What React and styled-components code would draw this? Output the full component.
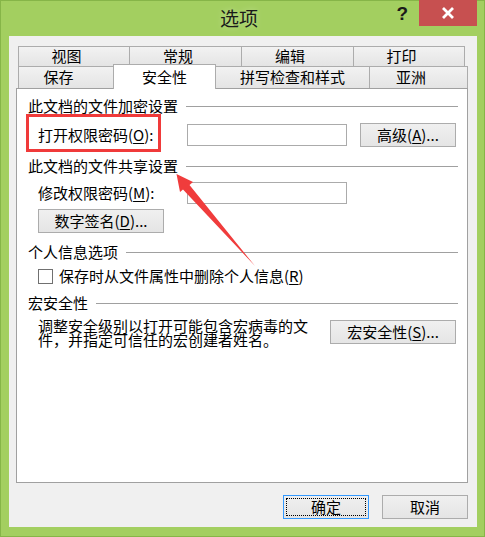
import styled, { createGlobalStyle } from "styled-components";

const GlobalStyle = createGlobalStyle`
  html, body {
    margin: 0;
    padding: 0;
    overflow: hidden;
    background: #a3cf60;
  }
  * { box-sizing: border-box; }
`;

const fonte = `"Noto Sans CJK SC", "Noto Sans", sans-serif`;

const Janela = styled.div`
  position: relative;
  width: 485px;
  height: 537px;
  background: #a3cf60;
  border: 1px solid #86b548;
  display: flex;
  flex-direction: column;
  font-family: ${fonte};
  font-size: 15px;
  color: #000;
`;

const BarraTitulo = styled.div`
  height: 35px;
  display: grid;
  grid-template-columns: 1fr auto 1fr;
  align-items: start;
  padding-right: 7px;
`;

const Titulo = styled.div`
  grid-column: 2;
  font-size: 19px;
  line-height: 33px;
  color: #1a1a1a;
  text-shadow: 0 0 6px rgba(255, 255, 255, 0.35);
`;

const Controles = styled.div`
  grid-column: 3;
  justify-self: end;
  display: flex;
  align-items: flex-start;
`;

const Ajuda = styled.div`
  font-family: "Liberation Sans", sans-serif;
  font-weight: bold;
  font-size: 19px;
  line-height: 26px;
  color: #1a1a1a;
  margin-right: 11px;
`;

const Fechar = styled.div`
  width: 58px;
  height: 26px;
  margin-top: -1px;
  background: #c75050;
  color: #fff;
  display: flex;
  align-items: center;
  justify-content: center;
`;

const Cliente = styled.div`
  flex: 1;
  margin: 0 7px 9px 8px;
  background: #f0f0f0;
  padding: 10px 9px 8px 7px;
  display: flex;
  flex-direction: column;
`;

const Abas = styled.div`
  margin: 0 1px 0 2px;
  display: flex;
  flex-direction: column;
  position: relative;
  z-index: 1;
`;

const LinhaAbas = styled.div`
  display: grid;
  grid-template-columns: ${(p) => p.$colunas};
  height: ${(p) => p.$altura}px;
`;

const Aba = styled.div`
  border: 1px solid #acacac;
  border-bottom: none;
  margin-left: -1px;
  &:first-child { margin-left: 0; }
  background: linear-gradient(#f2f2f2, #e4e4e4);
  display: flex;
  align-items: center;
  justify-content: center;
  padding-right: ${(p) => (p.$recuo ? 15 : 0)}px;
  padding-bottom: 1px;
  line-height: 18px;
  white-space: nowrap;
  ${(p) =>
    p.$ativa &&
    `
    background: #fff;
    margin-top: -2px;
    margin-bottom: -1px;
  `}
`;

const Painel = styled.div`
  flex: 1;
  background: #fff;
  border: 1px solid #a0a0a0;
  padding: 8px 9px 0 11px;
  display: flex;
  flex-direction: column;
`;

const Cabecalho = styled.div`
  height: 18px;
  margin-top: ${(p) => p.$topo || 0}px;
  display: flex;
  align-items: center;
  gap: 8px;
  line-height: 18px;
  white-space: nowrap;

  &::after {
    content: "";
    flex: 1;
    height: 1px;
    background: #a0a0a0;
  }
`;

const Linha = styled.div`
  display: flex;
  align-items: center;
  margin-top: ${(p) => p.$topo || 0}px;
  padding-left: 10px;
  height: ${(p) => p.$altura}px;
  line-height: 18px;
`;

const Rotulo = styled.label`
  position: relative;
  width: 149px;
  line-height: 18px;
  white-space: nowrap;
`;

const Destaque = styled.span`
  position: absolute;
  left: -12px;
  top: -12px;
  width: 135px;
  height: 38px;
  border: 3px solid #f03a3a;
  pointer-events: none;
`;

const Campo = styled.div`
  width: 160px;
  height: ${(p) => p.$altura || 22}px;
  border: 1px solid #ababab;
  background: #fff;
`;

const Botao = styled.button`
  font-family: ${fonte};
  font-size: 15px;
  color: #000;
  width: ${(p) => p.$largura}px;
  height: 24px;
  margin-left: ${(p) => p.$esquerda || 0}px;
  margin-top: ${(p) => p.$topo || 0}px;
  padding: 0;
  border: 1px solid #acacac;
  background: linear-gradient(#f0f0f0, #e5e5e5);
  line-height: 18px;
  display: flex;
  align-items: center;
  justify-content: center;
  white-space: nowrap;
  position: relative;

  ${(p) =>
    p.$foco &&
    `
    border-color: #3399ff;
    &::after {
      content: "";
      position: absolute;
      inset: 2px;
      border: 1px dotted #000;
    }
  `}
`;

const Caixa = styled.span`
  width: 15px;
  height: 15px;
  border: 1px solid #707070;
  background: #fff;
  margin-right: 6px;
`;

const Descricao = styled.div`
  width: 272px;
  line-height: 14px;
`;

const LinhaMacro = styled.div`
  display: flex;
  align-items: flex-start;
  margin-top: 7px;
  padding-left: 10px;
`;

const Rodape = styled.div`
  display: flex;
  justify-content: flex-end;
  gap: 13px;
  margin-top: 12px;
`;

const Seta = styled.svg`
  position: absolute;
  left: 0;
  top: 0;
  pointer-events: none;
`;

const Sub = styled.u`
  text-underline-offset: 2px;
`;

export default function App() {
  return (
    <>
      <GlobalStyle />
      <Janela>
        <BarraTitulo>
          <Titulo>选项</Titulo>
          <Controles>
            <Ajuda>?</Ajuda>
            <Fechar>
              <svg width="14" height="12" viewBox="0 0 14 12">
                <path d="M2 1 L12 11 M12 1 L2 11" stroke="#fff" strokeWidth="2.8" />
              </svg>
            </Fechar>
          </Controles>
        </BarraTitulo>

        <Cliente>
          <Abas>
            <LinhaAbas $colunas="112px 112px 112px 111px" $altura={20}>
              <Aba $recuo>视图</Aba>
              <Aba $recuo>常规</Aba>
              <Aba $recuo>编辑</Aba>
              <Aba $recuo>打印</Aba>
            </LinhaAbas>
            <LinhaAbas $colunas="96px 102px 154px 98px" $altura={22}>
              <Aba $recuo>保存</Aba>
              <Aba $ativa>安全性</Aba>
              <Aba>拼写检查和样式</Aba>
              <Aba $recuo>亚洲</Aba>
            </LinhaAbas>
          </Abas>

          <Painel>
            <Cabecalho>此文档的文件加密设置</Cabecalho>
            <Linha $topo={8} $altura={24}>
              <Rotulo>
                打开权限密码(<Sub>O</Sub>):
                <Destaque />
              </Rotulo>
              <Campo />
              <Botao $largura={96} $esquerda={13}>
                高级(<Sub>A</Sub>)...
              </Botao>
            </Linha>

            <Cabecalho $topo={10}>此文档的文件共享设置</Cabecalho>
            <Linha $topo={7} $altura={22}>
              <Rotulo>
                修改权限密码(<Sub>M</Sub>):
              </Rotulo>
              <Campo />
            </Linha>
            <Linha $topo={5} $altura={24}>
              <Botao $largura={126}>
                数字签名(<Sub>D</Sub>)...
              </Botao>
            </Linha>

            <Cabecalho $topo={10}>个人信息选项</Cabecalho>
            <Linha $topo={6} $altura={18}>
              <Caixa />
              保存时从文件属性中删除个人信息(<Sub>R</Sub>)
            </Linha>

            <Cabecalho $topo={9}>宏安全性</Cabecalho>
            <LinhaMacro>
              <Descricao>调整安全级别以打开可能包含宏病毒的文件，并指定可信任的宏创建者姓名。</Descricao>
              <Botao $largura={126} $esquerda={20} $topo={1}>
                宏安全性(<Sub>S</Sub>)...
              </Botao>
            </LinhaMacro>
          </Painel>

          <Rodape>
            <Botao $largura={86} $foco>确定</Botao>
            <Botao $largura={86}>取消</Botao>
          </Rodape>
        </Cliente>

        <Seta width="485" height="537" viewBox="0 0 485 537">
          <polygon
            points="175.5,173 192,181 188.5,184 254,265 182,188.5 179,191"
            fill="#f03c3c"
          />
        </Seta>
      </Janela>
    </>
  );
}
